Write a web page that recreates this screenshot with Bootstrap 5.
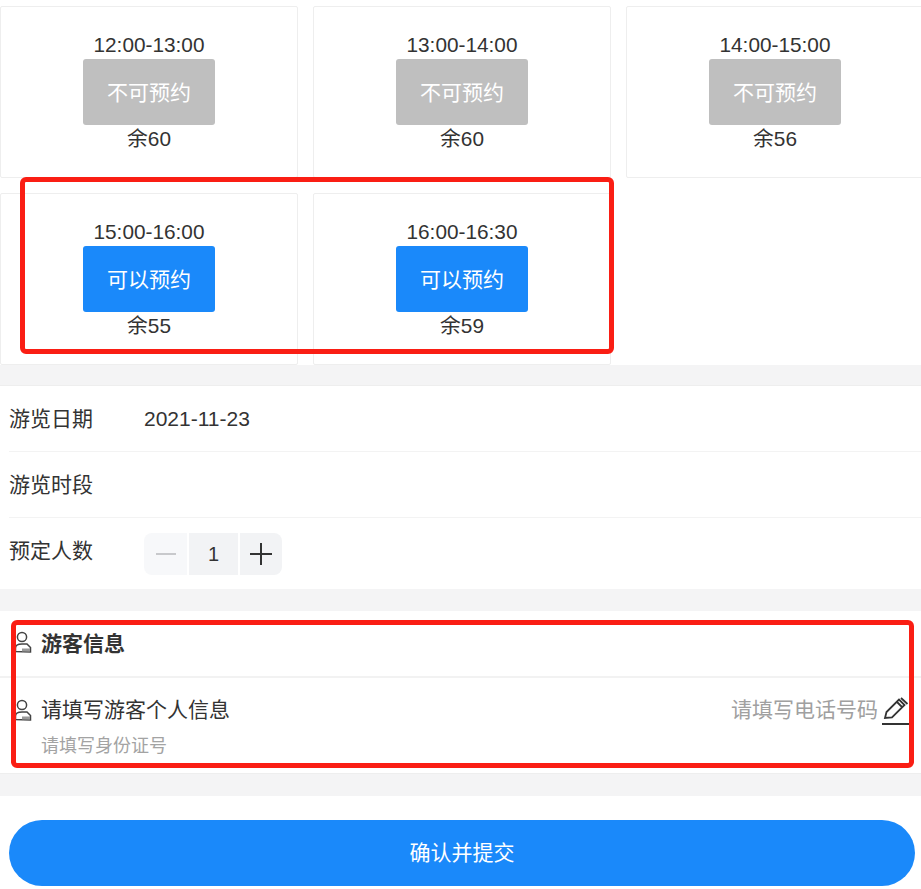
<!doctype html>
<html lang="zh"><head><meta charset="utf-8">
<link rel="stylesheet" href="https://cdn.jsdelivr.net/npm/bootstrap@5.3.0/dist/css/bootstrap.min.css">
<style>
html,body{height:889px;overflow:hidden;background:#fff}
body{font-family:"Liberation Sans","Noto Sans CJK SC",sans-serif;color:#333;position:relative;width:921px}
.slots{padding-top:6px;gap:15px;width:960px;height:365px;align-content:flex-start}
.slot{width:298px;height:172px;border:1px solid #eeeeee;border-radius:2px;padding-top:26px;font-size:20.8px;line-height:24px;color:#333}
.slot-btn{width:132px;height:66px;border-radius:3px;color:#fff;font-size:21px;line-height:68px;margin:2px auto 2px}
.slot-off{background:#bfbfbf}.slot-on{background:#1a89fa}
.band{background:#f4f4f5;height:20px}
.band-mid{height:22px;margin-top:6px}
.band-low{height:23px}
.topline{border-top:1px solid #eeeeee}
.frow{height:66px;margin-left:9px;font-size:21px;padding-top:20px;line-height:26px}
.frow:first-child{height:65px}
.frow+.frow{border-top:1px solid #f3f3f3}
.flabel{width:135px}
.stepper{gap:2px;margin-top:-5px}
.stp{height:42px;display:flex;align-items:center;justify-content:center;background:#f2f3f5;color:#333}
.stp-minus{width:43px;background:#f7f8fa;border-radius:8px 0 0 8px}
.stp-val{width:49px;font-size:20px}
.stp-plus{width:42px;border-radius:0 8px 8px 0}
.ghead{height:67px;border-bottom:2px solid #f2f2f2;padding-left:14px;font-size:21px;font-weight:700;line-height:26px;padding-top:20px}
.ginfo{height:95px;padding:17px 11px 0 14px;position:relative}
.gtitle{font-size:21px;line-height:28px}
.gsub{font-size:18px;line-height:24px;color:#a3a3a3;margin:9px 0 0 27px}
.gphone{font-size:21px;line-height:28px;color:#a0a0a0}
.pico{width:18px;height:22px;margin-right:9px;flex:none}
.pen-ico{margin-top:1px;margin-bottom:-1px}
.submit-btn{display:block;width:906px;height:66px;margin:24px 0 0 9px;background:#1a89fa;border:0;border-radius:33px;color:#fff;font-size:21px;padding:0;font-family:inherit}
.redbox{position:absolute;border:5px solid #fa1e14;border-radius:6px;pointer-events:none}
.rb1{left:20px;top:177px;width:594px;height:177px}
.rb2{left:11px;top:620px;width:903px;height:148px}
</style></head><body>
<svg width="0" height="0" class="position-absolute"><defs>
<symbol id="person" viewBox="0 0 18 22"><circle cx="8" cy="6" r="4.600" fill="none" stroke="#444" stroke-width="1.500"/><path d="M1.500 20.500v-3.500c0-2.500 2.500-4 6.500-4h5l3.500 3.500v4.500z" fill="none" stroke="#444" stroke-width="1.500"/><path d="M8 17.500h8v3H8z" fill="#999"/></symbol>
</defs></svg>
<div class="d-flex flex-wrap slots">
  <div class="slot text-center">12:00-13:00<div class="slot-btn slot-off">不可预约</div>余60</div>
  <div class="slot text-center">13:00-14:00<div class="slot-btn slot-off">不可预约</div>余60</div>
  <div class="slot text-center">14:00-15:00<div class="slot-btn slot-off">不可预约</div>余56</div>
  <div class="slot text-center">15:00-16:00<div class="slot-btn slot-on">可以预约</div>余55</div>
  <div class="slot text-center">16:00-16:30<div class="slot-btn slot-on">可以预约</div>余59</div>
</div>
<div class="band"></div>
<div class="topline">
  <div class="frow d-flex"><div class="flabel">游览日期</div><div>2021-11-23</div></div>
  <div class="frow d-flex"><div class="flabel">游览时段</div></div>
  <div class="frow d-flex"><div class="flabel">预定人数</div>
    <div class="d-flex stepper">
      <div class="stp stp-minus"><svg width="20" height="20" viewBox="0 0 20 20"><path d="M0 10h20" stroke="#c8c9cc" stroke-width="2"/></svg></div>
      <div class="stp stp-val">1</div>
      <div class="stp stp-plus"><svg width="22" height="22" viewBox="0 0 22 22"><path d="M0 11h22M11 0v22" stroke="#333" stroke-width="2"/></svg></div>
    </div>
  </div>
</div>
<div class="band band-mid"></div>
<div class="ghead d-flex align-items-start"><svg class="pico"><use href="#person"/></svg>游客信息</div>
<div class="ginfo">
  <div class="d-flex justify-content-between">
    <div class="d-flex align-items-center gtitle"><svg class="pico"><use href="#person"/></svg>请填写游客个人信息</div>
    <div class="d-flex align-items-center gphone">请填写电话号码<svg class="ms-1 pen-ico" width="28" height="30" viewBox="0 0 28 30"><path d="M3 22l1.500-6L17 3.500l5.500 5.500L10 21.500z M15 6l5.500 5.500 M19 2l6.500 6" fill="none" stroke="#333" stroke-width="1.800"/><path d="M0 28h28" stroke="#333" stroke-width="2"/></svg></div>
  </div>
  <div class="gsub">请填写身份证号</div>
</div>
<div class="band band-low topline"></div>
<button class="submit-btn">确认并提交</button>
<div class="redbox rb1"></div>
<div class="redbox rb2"></div>
<script src="https://cdn.jsdelivr.net/npm/bootstrap@5.3.0/dist/js/bootstrap.bundle.min.js"></script>
</body></html>
